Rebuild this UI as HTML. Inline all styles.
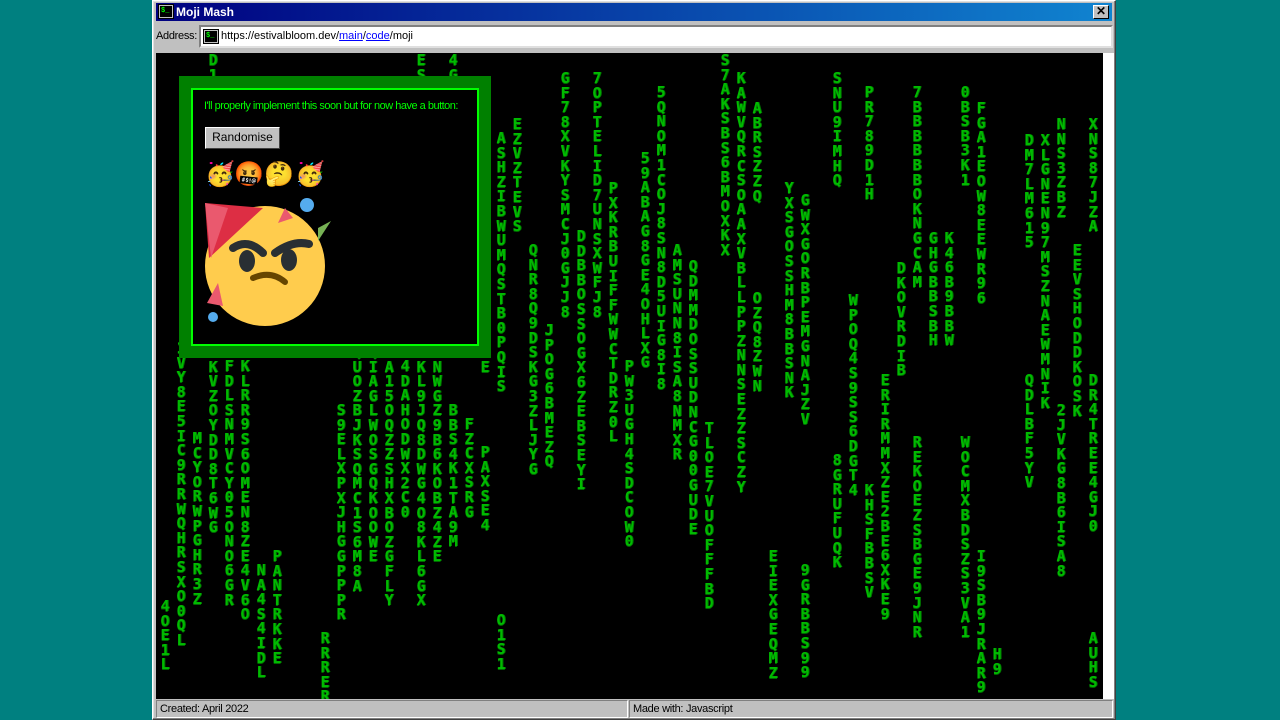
<!DOCTYPE html>
<html><head><meta charset="utf-8"><style>
*{margin:0;padding:0;box-sizing:border-box}
body{width:1280px;height:720px;background:#008080;position:relative;overflow:hidden;font-family:"Liberation Sans",sans-serif;font-size:12px}
.win{position:absolute;left:152px;top:0;width:964px;height:720px;background:#c0c0c0;border:1px solid #fff;border-right-color:#404040;border-bottom-color:#404040;box-shadow:inset -1px -1px #808080,inset 1px 1px #dfdfdf}
.title{position:absolute;left:3px;top:2px;width:956px;height:18px;background:linear-gradient(90deg,#000080,#1084d0);color:#fff;font-weight:bold;font-size:12px;line-height:18px;padding-left:20px}
.ico{position:absolute;width:14px;height:13px;background:#000;border:1px solid #c0c0c0;outline:1px solid #000;color:#0f0;font:bold 7px "Liberation Mono",monospace;line-height:11px;padding-left:1px}
.close{position:absolute;right:3px;top:2px;width:16px;height:14px;background:#c0c0c0;border:1px solid #fff;border-right-color:#000;border-bottom-color:#000;color:#000;font-size:12px;line-height:11px;text-align:center;font-weight:bold}
.addr{position:absolute;left:3px;top:29px;font-size:11px;color:#000;letter-spacing:-0.3px}
.abox{position:absolute;left:46px;top:24px;width:914px;height:23px;background:#fff;border:2px solid #808080;border-right-color:#dfdfdf;border-bottom-color:#dfdfdf;font-size:11px;line-height:19px;padding-left:20px}
.abox a{color:#00f;text-decoration:underline}
.content{position:absolute;left:3px;top:52px;width:947px;height:646px;background:#000;overflow:hidden}
.sb{position:absolute;left:950px;top:52px;width:11px;height:646px;background:#fff}
.col{position:absolute;width:14px;font:bold 15px "DejaVu Sans Mono",monospace;line-height:14.6px;color:#0b0;text-align:center;word-break:break-all;text-shadow:0 1px 0 #060,1px 0 0 #070}
.status{position:absolute;top:699px;height:18px;border:1px solid #808080;border-right-color:#fff;border-bottom-color:#fff;font-size:11px;line-height:16px;padding-left:3px;color:#000;letter-spacing:-0.3px}
.box{position:absolute;left:23px;top:23px;width:312px;height:282px;background:#008000}
.inner{position:absolute;left:12px;top:12px;width:288px;height:258px;background:#000;border:2px solid #0f0}
.txt{position:absolute;left:11px;top:10px;color:#0f0;font-size:11px;letter-spacing:-0.5px}
.btn{position:absolute;left:12px;top:37px;width:75px;height:22px;background:#c0c0c0;border:1px solid #fff;border-right-color:#404040;border-bottom-color:#404040;font-size:12px;text-align:center;line-height:19px;color:#000}
.em{position:absolute;top:70px;font-size:24px;font-family:"Noto Color Emoji",sans-serif}
</style></head><body>
<div class="win">
<div class="title"><div class="ico" style="left:3px;top:2px">$_</div>Moji Mash<div class="close">✕</div></div>
<div class="addr">Address:</div>
<div class="abox"><div class="ico" style="left:3px;top:3px">$_</div>https://estivalbloom.dev/<a>main</a>/<a>code</a>/moji</div>
<div class="content">
<div class="col" style="left:2px;top:546px">4OE1L</div>
<div class="col" style="left:18px;top:288px">1VY8E5IC9RRWQHRSXO0QL</div>
<div class="col" style="left:34px;top:378px">MCYORWPGHR3Z</div>
<div class="col" style="left:50px;top:0px">D1</div>
<div class="col" style="left:50px;top:292px">HKVZOYDD8T6WG</div>
<div class="col" style="left:66px;top:306px">FDLSNMVCY05ONO6GR</div>
<div class="col" style="left:82px;top:306px">KLRR9S6OMEN8ZE4V6O</div>
<div class="col" style="left:98px;top:510px">NA4S4IDL</div>
<div class="col" style="left:114px;top:496px">PA NTRKKE</div>
<div class="col" style="left:146px;top:292px">J</div>
<div class="col" style="left:162px;top:578px">RRRERR</div>
<div class="col" style="left:178px;top:350px">S9ELXPXJHGGPPPR</div>
<div class="col" style="left:194px;top:292px">QUOZBJKSQMC1S6M8A</div>
<div class="col" style="left:210px;top:292px">QIAGLWOSGQKOOWE</div>
<div class="col" style="left:226px;top:292px">CA15OQZZSHXBOZGFLY</div>
<div class="col" style="left:242px;top:306px">4DAHODWX2C0</div>
<div class="col" style="left:258px;top:0px">ESZY</div>
<div class="col" style="left:258px;top:292px">XKL9JQ8DWG4O8KL6GX</div>
<div class="col" style="left:274px;top:292px">ONWGZ9B6KOBZ4ZE</div>
<div class="col" style="left:290px;top:0px">4G</div>
<div class="col" style="left:290px;top:350px">BBS4K1TA9M</div>
<div class="col" style="left:306px;top:364px">FZCXSRG</div>
<div class="col" style="left:322px;top:292px">EE</div>
<div class="col" style="left:322px;top:392px">PAXSE4</div>
<div class="col" style="left:338px;top:78px">ASHZIBWUMQSTB0PQIS</div>
<div class="col" style="left:338px;top:560px">O1S1</div>
<div class="col" style="left:354px;top:64px">EZVZTEVS</div>
<div class="col" style="left:370px;top:190px">QNR8Q9DSKG3ZLJYG</div>
<div class="col" style="left:386px;top:270px">JPOG6BMEZQ</div>
<div class="col" style="left:402px;top:18px">GF78XVKYSMCJ0GJJ8</div>
<div class="col" style="left:418px;top:176px">DDBBOSSOGX6ZEBSEYI</div>
<div class="col" style="left:434px;top:18px">7OPTELID7UNSXWFJ8</div>
<div class="col" style="left:450px;top:128px">PXKRBUIFFWWCTDRZ0L</div>
<div class="col" style="left:466px;top:306px">PW3UGH4SDCOW0</div>
<div class="col" style="left:482px;top:98px">59ABAG8GE4OHLXG</div>
<div class="col" style="left:498px;top:32px">5QNOM1COJ8SN8D5UIG8I8</div>
<div class="col" style="left:514px;top:190px">AMSUNN8ISA8NMXR</div>
<div class="col" style="left:530px;top:206px">QDMMDOSSUDNCG00GUDE</div>
<div class="col" style="left:546px;top:368px">TLOE7VUOFFFBD</div>
<div class="col" style="left:562px;top:0px">S7AKSBS6BMOXKX</div>
<div class="col" style="left:578px;top:18px">KAWVQRCSOAAXVBLLPPZNNSEZZSCZY</div>
<div class="col" style="left:594px;top:48px">ABRSZZQ</div>
<div class="col" style="left:594px;top:238px">OZQ8ZWN</div>
<div class="col" style="left:610px;top:496px">EIEXGEQMZ</div>
<div class="col" style="left:626px;top:128px">YXSGOSSHM8BBSNK</div>
<div class="col" style="left:642px;top:140px">GWXGORBPEMGNAJZV</div>
<div class="col" style="left:642px;top:510px">9GRBBS99</div>
<div class="col" style="left:674px;top:18px">SNU9IMHQ</div>
<div class="col" style="left:674px;top:400px">8GRUFUQK</div>
<div class="col" style="left:690px;top:240px">WPOQ4S9SS6DGT4</div>
<div class="col" style="left:706px;top:32px">PR789D1H</div>
<div class="col" style="left:706px;top:430px">KHSFBBSV</div>
<div class="col" style="left:722px;top:320px">ERIRMMXZE2BE6XKE9</div>
<div class="col" style="left:738px;top:208px">DKOVRDIB</div>
<div class="col" style="left:754px;top:32px">7BBBBBBOKNGCAM</div>
<div class="col" style="left:754px;top:382px">REKOEZSBGE9JNR</div>
<div class="col" style="left:770px;top:178px">GHGBBSBH</div>
<div class="col" style="left:786px;top:178px">K46B9BBW</div>
<div class="col" style="left:802px;top:32px">0BSB3K1</div>
<div class="col" style="left:802px;top:382px">WOCMXBDSZS3VA1</div>
<div class="col" style="left:818px;top:48px">FGA1EOW8EEWR96</div>
<div class="col" style="left:818px;top:496px">I9SB9JRAR9</div>
<div class="col" style="left:834px;top:594px">H9</div>
<div class="col" style="left:866px;top:80px">DM7LM615</div>
<div class="col" style="left:866px;top:320px">QDLBF5YV</div>
<div class="col" style="left:882px;top:80px">XLGNEN97MSZNAEWMNIK</div>
<div class="col" style="left:898px;top:64px">NNS3ZBZ</div>
<div class="col" style="left:898px;top:350px">2JVKG8B6ISA8</div>
<div class="col" style="left:914px;top:190px">EEVSHODDKOSK</div>
<div class="col" style="left:930px;top:64px">XNS87JZA</div>
<div class="col" style="left:930px;top:320px">DR4TREE4GJ0</div>
<div class="col" style="left:930px;top:578px">AUHS</div>
<div class="box"><div class="inner">
<div class="txt">I'll properly implement this soon but for now have a button:</div>
<div class="btn">Randomise</div>
<div class="em" style="left:12px">🥳</div><div class="em" style="left:41px">🤬</div><div class="em" style="left:71px">🤔</div><div class="em" style="left:102px">🥳</div>
<svg style="position:absolute;left:10px;top:108px" width="130" height="130" viewBox="0 0 130 130">
<circle cx="62" cy="68" r="60" fill="#ffcc4d"/>
<path d="M2 5 L60 10 L6 60 Z" fill="#dd2e44"/><path d="M2 5 L25 10 L8 60 Z" fill="#ea596e"/>
<path d="M75 25 L82 10 L90 20 Z" fill="#ea596e"/>
<path d="M115 30 L128 23 L115 43 Z" fill="#77b255"/>
<path d="M4 105 L15 85 L20 108 Z" fill="#ea596e"/>
<circle cx="104" cy="7" r="7" fill="#55acee"/><circle cx="10" cy="119" r="5" fill="#55acee"/>
<path d="M30 50 Q45 40 60 55" stroke="#292f33" stroke-width="8" fill="none" stroke-linecap="round"/>
<path d="M72 55 Q90 42 106 46" stroke="#292f33" stroke-width="8" fill="none" stroke-linecap="round"/>
<ellipse cx="44" cy="63" rx="8" ry="11" fill="#292f33"/><ellipse cx="86" cy="62" rx="8" ry="11" fill="#292f33"/>
<path d="M50 80 Q68 72 82 84" stroke="#664500" stroke-width="6" fill="none" stroke-linecap="round"/>
</svg>
</div></div>
</div>
<div class="sb"></div>
<div class="status" style="left:3px;width:472px">Created: April 2022</div>
<div class="status" style="left:476px;width:484px">Made with: Javascript</div>
</div>
</body></html>
